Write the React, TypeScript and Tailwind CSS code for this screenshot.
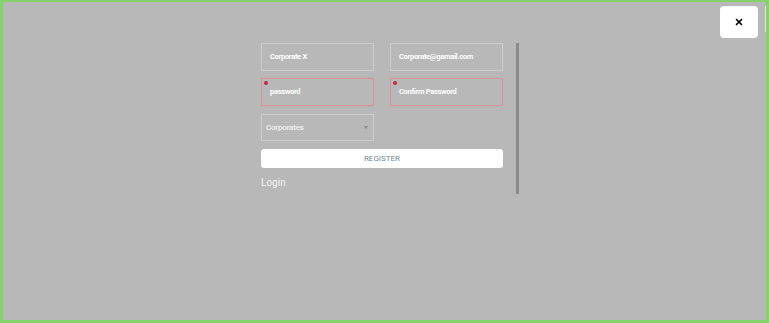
import { X } from 'lucide-react';

const font = { fontFamily: 'Roboto, "Liberation Sans", sans-serif' };

function Field({ label, invalid }: { label: string; invalid?: boolean }) {
  return (
    <div
      className={
        invalid
          ? 'relative h-[28px] w-[113px] border border-[#d9909b] flex items-center pl-2'
          : 'relative h-[28px] w-[113px] border border-[#cdcdcd] flex items-center pl-2'
      }
    >
      {invalid && <span className="absolute left-[2px] top-[2px] h-[4px] w-[4px] rounded-full bg-[#c0283e]" />}
      <span className="text-[7.5px] font-bold tracking-[-0.3px] text-white">{label}</span>
    </div>
  );
}

export default function App() {
  return (
    <div style={font} className="h-[323px] w-[769px] border-[3px] border-t-2 border-[#84d26a] bg-[#b8b8b8] relative overflow-hidden">
      <button className="absolute right-[8px] top-[4px] h-[32px] w-[38px] rounded-[4px] bg-white flex items-center justify-center">
        <X className="h-[10px] w-[10px] text-black" strokeWidth={4} />
      </button>
      <div className="absolute right-0 top-[4px] h-[26px] w-[1px] bg-[#e6e6e6]" />

      <div className="ml-[258px] mt-[41px] flex">
        <div className="w-[242px] flex flex-col">
          <div className="flex gap-[16px]">
            <Field label="Corporate X" />
            <Field label="Corporate@gamail.com" />
          </div>
          <div className="flex gap-[16px] mt-[7px]">
            <Field label="password" invalid />
            <Field label="Confirm Password" invalid />
          </div>
          <div className="mt-[8px] h-[27px] w-[113px] border border-[#cdcdcd] flex items-center justify-between pl-[4px] pr-[5px]">
            <span className="text-[8px] font-medium tracking-[-0.2px] text-[#f2f2f2]">Corporates</span>
            <span className="h-0 w-0 border-l-[2px] border-r-[2px] border-t-[3px] border-l-transparent border-r-transparent border-t-[#8a8a8a]" />
          </div>
          <button className="mt-[8px] h-[19px] w-[242px] rounded-[3px] bg-white text-[8px] text-[#6f8a91]">
            REGISTER
          </button>
          <div className="mt-[7px] text-[10px] text-[#f5f5f5]">Login</div>
        </div>
        <div className="ml-[13px] h-[151px] w-[3px] bg-[#8b8b8b]" />
      </div>
    </div>
  );
}
